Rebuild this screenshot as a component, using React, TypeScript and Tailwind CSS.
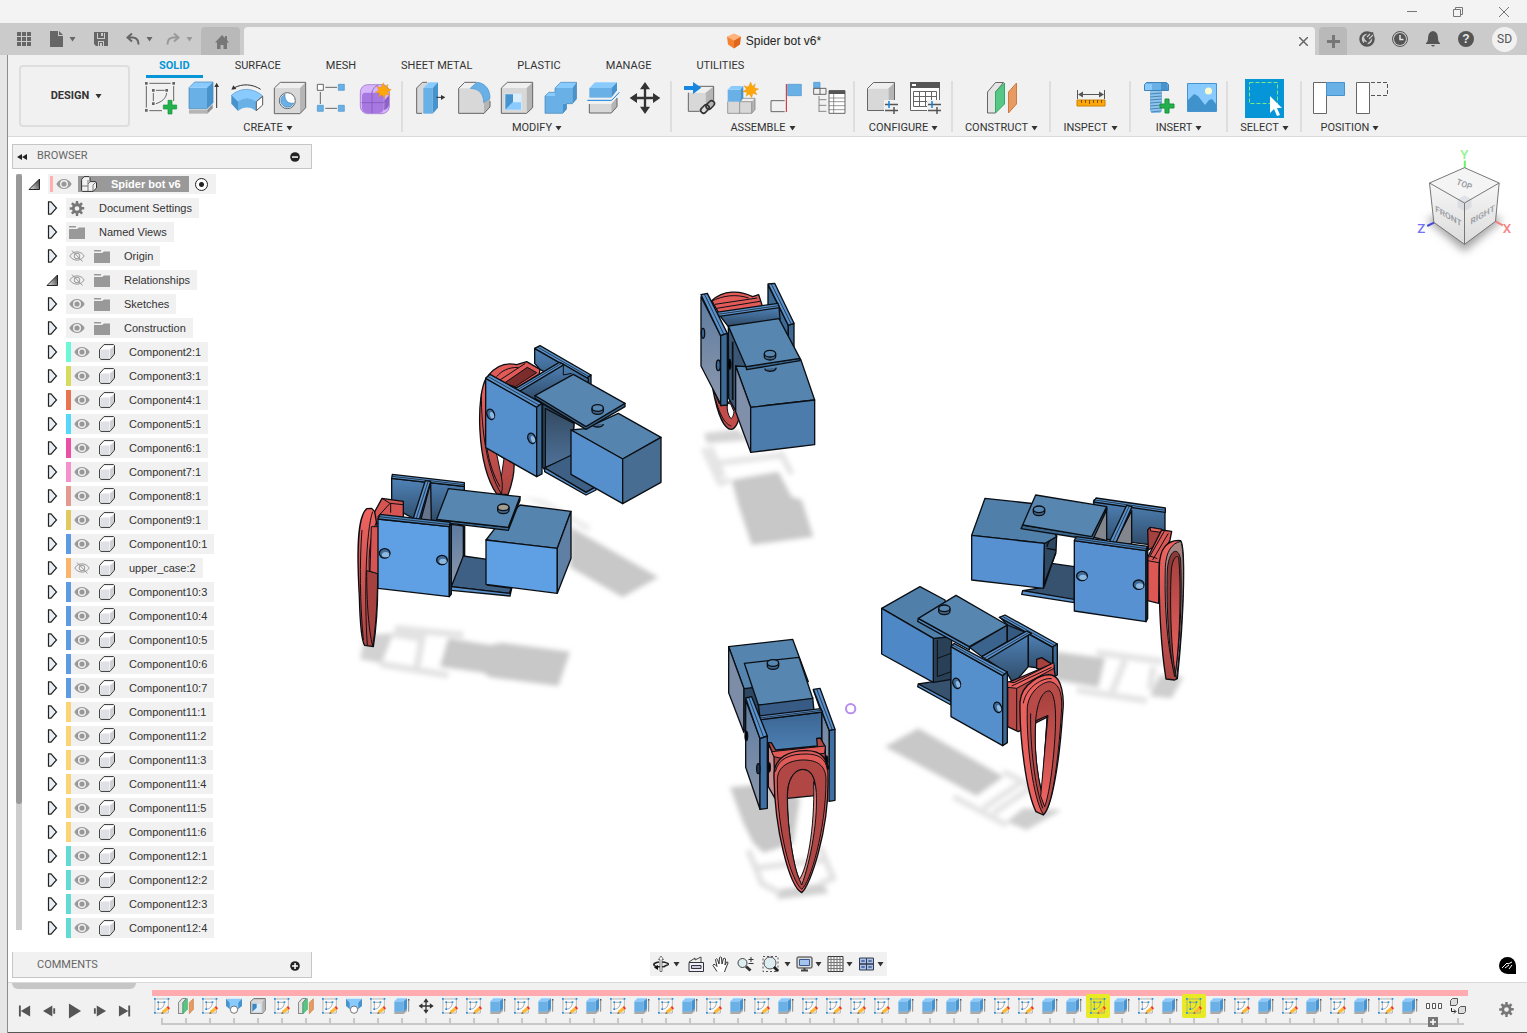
import React from 'react';

type IconProps = { children: React.ReactNode; box: string; className?: string };

const Icon = ({ children, box, className = 'h-9 w-9' }: IconProps) => (
  <svg viewBox={box} className={`${className} shrink-0`} fill="none" aria-hidden="true">
    {children}
  </svg>
);

const Caret = ({ className = 'fill-[#333]' }: { className?: string }) => (
  <svg viewBox="0 0 7 5" className={`h-[5px] w-[7px] shrink-0 ${className}`} aria-hidden="true">
    <path d="M.5 0h6L3.500 4.500z" />
  </svg>
);

const Star = ({ x, y }: { x: number; y: number }) => (
  <path
    transform={`translate(${x} ${y})`}
    d="M0-24 5-11 14-19 11-7 24-3 13 3 19 14 7 10 3 23-4 12-14 19-11 7-24 5-13-2-20-13-7-9z"
    fill="#ffa60a"
    stroke="#d98a00"
    strokeWidth="1"
  />
);

/* ---------- Ribbon icons ---------- */

const createIcons = [
  {
    name: 'Create Sketch',
    icon: (
      <Icon box="429 240 108 108">
        <path d="M448 250h64M439 258v65M521 258v45M448 332h38" stroke="#666" strokeWidth="3" />
        <path d="M435 246h8v8h-8zM517 246h8v8h-8zM435 327h8v8h-8zM456 267h8v8h-8zM496 267h8v8h-8zM456 307h8v8h-8z" fill="#666" />
        <path d="M468 271h26M460 279v24M500 279c-2 16-14 26-32 32" stroke="#666" strokeWidth="3" />
        <path d="M504 301h12v14h14v12h-14v15h-12v-15h-14v-12h14z" fill="#22b14c" stroke="#16913a" strokeWidth="2" />
      </Icon>
    ),
  },
  {
    name: 'Extrude',
    icon: (
      <Icon box="558 240 108 108">
        <path d="M567 329h55v12h-55z" fill="#b5b5b5" />
        <path d="M622 329l16-16v12l-16 16z" fill="#8f8f8f" />
        <path d="M567 263h54v63h-54z" fill="#69b0e6" />
        <path d="M567 263l17-17h55l-18 17z" fill="#8acbff" />
        <path d="M621 263l18-17v62l-18 18z" fill="#4693cd" />
        <path d="M567 326v-63l17-17h55v62l-18 18z" stroke="#3f83b8" strokeWidth="2" />
        <path d="M650 324v-66" stroke="#333" strokeWidth="3" />
        <path d="M650 248l7 13h-14z" fill="#333" />
      </Icon>
    ),
  },
  {
    name: 'Revolve',
    icon: (
      <Icon box="687 240 108 108">
        <path d="M694 286c28-24 64-24 94 2l-20 18c-18-12-36-12-54 0z" fill="#8acbff" stroke="#4693cd" strokeWidth="2" />
        <path d="M694 286l20 20v27l-20-22z" fill="#4693cd" />
        <path d="M714 306c18-12 36-12 54 0v27c-18-14-36-14-54 0z" fill="#69b0e6" />
        <path d="M769 305l19-16v26l-19 17z" fill="#fff" stroke="#555" strokeWidth="3" />
        <path d="M782 268c-24-16-56-18-80-4" stroke="#333" strokeWidth="3" />
        <path d="M694 269l6-13 9 11z" fill="#333" />
      </Icon>
    ),
  },
  {
    name: 'Hole',
    icon: (
      <Icon box="816 240 108 108">
        <path d="M823 264h77v77h-77z" fill="#d8d8d8" />
        <path d="M823 264l18-17h76l-17 17z" fill="#efefef" />
        <path d="M900 264l17-17v76l-17 18z" fill="#b5b5b5" />
        <path d="M823 341v-77l18-17h76v76l-17 18z" stroke="#666" strokeWidth="3" />
        <circle cx="862" cy="302" r="24" fill="#fff" stroke="#666" strokeWidth="3" />
        <path d="M855 283a20 20 0 1 0 26 26c-16 4-28-8-26-26z" fill="#69b0e6" stroke="#3f83b8" strokeWidth="2" />
      </Icon>
    ),
  },
  {
    name: 'Rectangular Pattern',
    icon: (
      <Icon box="945 240 108 108">
        <path d="M976 262h35M961 276v36M976 325h35" stroke="#666" strokeWidth="3" />
        <path d="M952 253h18v18h-18z" fill="#fff" stroke="#666" strokeWidth="3" />
        <path d="M1015 253h18v18h-18zM1015 316h18v18h-18zM952 316h18v18h-18z" fill="#69b0e6" stroke="#4693cd" strokeWidth="2" />
      </Icon>
    ),
  },
  {
    name: 'Create Form',
    icon: (
      <Icon box="1074 240 108 108">
        <rect x="1081" y="254" width="87" height="87" rx="22" fill="#d6b5fb" stroke="#8f5fc4" strokeWidth="2" />
        <path d="M1095 278h46q9 0 9 9v40q0 12-14 12h-32q-18 0-18-16v-34q0-11 9-11z" fill="#a678e0" />
        <path d="M1154 300l13-14v26q0 12-14 18z" fill="#8f62c9" />
        <path d="M1084 308h66q12-6 17-14M1116 274v66M1116 276c4-12 10-18 18-20M1152 276v54" stroke="#7d51b5" strokeWidth="2" />
        <Star x={1150} y={272} />
      </Icon>
    ),
  },
];

const modifyIcons = [
  {
    name: 'Press Pull',
    icon: (
      <Icon box="32 90 108 108">
        <path d="M46 114l17-17h20v93H46z" fill="#d8d8d8" />
        <path d="M62 190H46v-76l17-17h14" stroke="#666" strokeWidth="3" />
        <path d="M66 114h28v77H66z" fill="#69b0e6" />
        <path d="M66 114l17-17h27l-16 17z" fill="#8acbff" />
        <path d="M94 114l16-17v76l-16 18z" fill="#4693cd" />
        <path d="M105 142h16" stroke="#333" strokeWidth="3" />
        <path d="M119 135l13 7-13 8z" fill="#333" />
      </Icon>
    ),
  },
  {
    name: 'Fillet',
    icon: (
      <Icon box="161 90 108 108">
        <path d="M172 191v-76l18-18h30v20c20 4 30 22 32 44v30z" fill="#d8d8d8" />
        <path d="M172 115l18-18h34l-17 18z" fill="#efefef" />
        <path d="M248 158l18-14v26l-18 20z" fill="#b5b5b5" />
        <path d="M225 97H190l-18 18v75h76l18-19v-18" stroke="#666" strokeWidth="3" />
        <path d="M207 115l20-18c26 2 40 24 39 48l-19 13c0-24-12-42-40-43z" fill="#69b0e6" stroke="#4693cd" strokeWidth="2" />
      </Icon>
    ),
  },
  {
    name: 'Shell',
    icon: (
      <Icon box="291 90 108 108">
        <path d="M301 114h76v76h-76z" fill="#d8d8d8" />
        <path d="M301 114l18-17h76l-18 17z" fill="#efefef" />
        <path d="M377 114l18-17v76l-18 17z" fill="#b5b5b5" />
        <path d="M301 190v-76l18-17h76v76l-18 17z" stroke="#666" strokeWidth="3" />
        <path d="M311 131h51v49h-51z" fill="#d9edfb" />
        <path d="M313 133h23v24l-23 22z" fill="#4693cd" />
        <path d="M336 157h24v22h-47z" fill="#8acbff" />
      </Icon>
    ),
  },
  {
    name: 'Combine',
    icon: (
      <Icon box="418 90 108 108">
        <path d="M430 138h30v-24h52v47h-28v29h-54z" fill="#69b0e6" />
        <path d="M460 114l17-17h48l-13 17zM430 138l12-11h18v11z" fill="#8acbff" />
        <path d="M512 114l13-17v49l-13 15zM484 161h11v16l-11 13z" fill="#4693cd" />
        <path d="M430 190v-52l12-11h18v-13l17-17h48v49l-13 15h-18v16l-11 13z" stroke="#3f83b8" strokeWidth="2" />
      </Icon>
    ),
  },
  {
    name: 'Split Body',
    icon: (
      <Icon box="548 90 108 108">
        <path d="M564 162h66v27h-66z" fill="#d8d8d8" />
        <path d="M630 162l17-20v28l-17 19z" fill="#b5b5b5" />
        <path d="M564 162v27h66l17-19v-26" stroke="#666" strokeWidth="3" />
        <path d="M564 114h66v29h-66z" fill="#69b0e6" />
        <path d="M564 114l17-17h66l-17 17z" fill="#8acbff" />
        <path d="M630 114l17-17v24l-17 22z" fill="#4693cd" />
        <path d="M558 151h73l23-24" stroke="#f1f1f1" strokeWidth="9" />
        <path d="M558 151h73l23-24" stroke="#0f82e0" strokeWidth="3" />
      </Icon>
    ),
  },
  {
    name: 'Move/Copy',
    icon: (
      <Icon box="681 90 108 108">
        <path d="M735 110v68M704 144h62" stroke="#333" strokeWidth="7" />
        <path d="M735 96l15 22h-30zM735 192l15-22h-30zM689 144l22-15v30zM781 144l-22-15v30z" fill="#333" />
      </Icon>
    ),
  },
];

const assembleIcons = [
  {
    name: 'Insert Component',
    icon: (
      <Icon box="840 90 108 108">
        <path d="M862 128h52v56h-52z" fill="#d8d8d8" />
        <path d="M862 128l22-19h54l-24 19z" fill="#efefef" />
        <path d="M914 128l24-19v54l-24 20z" fill="#b5b5b5" />
        <path d="M896 184h-34v-56M884 109h54v44" stroke="#666" strokeWidth="3" />
        <path d="M849 108h27V96l25 17-25 19v-12h-27z" fill="#1686e0" />
        <rect x="898" y="168" width="28" height="17" rx="8" transform="rotate(-45 912 177)" stroke="#333" strokeWidth="5" />
        <rect x="914" y="156" width="28" height="17" rx="8" transform="rotate(-45 928 165)" stroke="#333" strokeWidth="5" />
      </Icon>
    ),
  },
  {
    name: 'New Component',
    icon: (
      <Icon box="968 90 108 108">
        <path d="M979 148h72v42h-72z" fill="#d8d8d8" />
        <path d="M1015 155l9-10h37l-10 10z" fill="#efefef" />
        <path d="M1051 155l10-10v34l-10 11z" fill="#b5b5b5" />
        <path d="M979 155v35h72l10-11v-34h-37l-9 10v35M1015 155h36v35" stroke="#777" strokeWidth="2" />
        <path d="M979 119h38v36h-38z" fill="#69b0e6" />
        <path d="M979 119l11-11h36l-9 11z" fill="#8acbff" />
        <path d="M1017 119l9-11v36l-9 11z" fill="#4693cd" />
        <Star x={1048} y={120} />
      </Icon>
    ),
  },
  {
    name: 'Joint',
    icon: (
      <Icon box="1096 90 108 108">
        <path d="M1149 152h-41v33h41" stroke="#666" strokeWidth="3" />
        <path d="M1158 103h41v34h-41z" fill="#69b0e6" stroke="#4693cd" strokeWidth="2" />
        <path d="M1154 102v84" stroke="#d01f1f" strokeWidth="3" />
      </Icon>
    ),
  },
  {
    name: 'Bill of Materials',
    icon: (
      <Icon box="1226 90 108 108">
        <path d="M1237 97h19v18h-19z" fill="#69b0e6" stroke="#4693cd" strokeWidth="2" />
        <path d="M1237 115h37v18h-37zM1256 115v18" stroke="#666" strokeWidth="3" />
        <path d="M1253 138v48M1253 149h22M1253 166h22M1253 184h22" stroke="#888" strokeWidth="3" />
        <path d="M1283 122h48v68h-48z" fill="#fff" stroke="#666" strokeWidth="3" />
        <path d="M1283 121h48v11h-48z" fill="#555" />
        <path d="M1283 144h48M1283 155h48M1283 167h48M1283 179h48M1297 132v58" stroke="#666" strokeWidth="2" />
      </Icon>
    ),
  },
];

const Sliders = ({ x, y }: { x: number; y: number }) => (
  <g transform={`translate(${x} ${y})`} strokeWidth="1">
    <path d="M-1-1h14v13H-1z" fill="#f1f1f1" />
    <path d="M0 3.500h13M0 9.500h13" stroke="#555" strokeWidth="1.500" />
    <path d="M4 0v7" stroke="#0f82e0" strokeWidth="1.500" />
    <path d="M9 6v7" stroke="#555" strokeWidth="1.500" />
  </g>
);

const configureIcons = [
  {
    name: 'Configure Component',
    icon: (
      <Icon box="0 0 36 36">
        <path d="M3.500 8.500h21v22h-21z" fill="#d8d8d8" />
        <path d="M3.500 8.500l6-6h21l-6 6z" fill="#efefef" />
        <path d="M24.500 8.500l6-6v20l-6 6z" fill="#b5b5b5" />
        <path d="M20 30.500H3.500v-22l6-6h21V22" stroke="#666" />
        <Sliders x={21} y={21} />
      </Icon>
    ),
  },
  {
    name: 'Configuration Table',
    icon: (
      <Icon box="0 0 36 36">
        <path d="M3.500 3.500h29v27h-29z" fill="#fff" stroke="#666" />
        <path d="M3 2h30v6H3z" fill="#555" />
        <path d="M5 4h4v2H5z" fill="#fff" />
        <path d="M6.500 11.500h23v15h-23zM6.500 16.500h23M6.500 21.500h23M12.500 11.500v15M18.500 11.500v15M24.500 11.500v15" stroke="#666" />
        <Sliders x={21} y={21} />
      </Icon>
    ),
  },
];

const constructIcons = [
  {
    name: 'Offset Plane',
    icon: (
      <Icon box="0 0 36 36">
        <path d="M3.500 12l8-9.500h8l-8 9.500v21h-8z" fill="#e4e4e4" stroke="#666" />
        <path d="M11.500 12l9-9v21l-9 9z" fill="#57c785" stroke="#35a863" />
        <path d="M24.500 12l8-9v21l-8 9z" fill="#e89a63" stroke="#cc7a40" />
      </Icon>
    ),
  },
];

const inspectIcons = [
  {
    name: 'Measure',
    icon: (
      <Icon box="0 0 36 36">
        <path d="M4.500 10v9M31.500 10v9M6 14.500h24" stroke="#555" />
        <path d="M5 14.500l5-3v6zM31 14.500l-5-3v6z" fill="#555" />
        <path d="M4 20h28v6H4z" fill="#ffa60a" stroke="#c98200" />
        <path d="M8.500 20v3M12.500 20v3M16.500 20v4M20.500 20v3M24.500 20v3M28.500 20v3" stroke="#7d5200" />
      </Icon>
    ),
  },
];

const insertIcons = [
  {
    name: 'Insert Fastener',
    icon: (
      <Icon box="0 0 36 36">
        <path d="M4.500 4.500l2-2h20l2 2v6h-24z" fill="#69b0e6" stroke="#3f83b8" />
        <path d="M5 4h7v6H5z" fill="#8acbff" />
        <path d="M21 3h6l1 7h-7z" fill="#4693cd" />
        <path d="M10 11h12v20l-2 2h-8l-2-2z" fill="#8cc3ec" />
        <path d="M10 14l12-1M10 17l12-1M10 20l12-1M10 23l12-1M10 26l12-1M10 29l12-1M11 32l10-1" stroke="#4a86b5" />
        <path d="M25 19h4v5h5v4h-5v5h-4v-5h-5v-4h5z" fill="#22b14c" stroke="#16913a" />
      </Icon>
    ),
  },
  {
    name: 'Canvas',
    icon: (
      <Icon box="0 0 36 36">
        <path d="M4.500 3.500h29v28h-29z" fill="#8acbff" stroke="#4693cd" />
        <path d="M5 20l6-6 4 2 7 9 4-5 3-1 4 5v7H5z" fill="#3f92cc" />
        <circle cx="25.500" cy="11" r="3.500" fill="#fdfccf" />
      </Icon>
    ),
  },
];

const selectIcons = [
  {
    name: 'Select',
    icon: (
      <span className="flex h-[39px] w-[39px] shrink-0 items-center justify-center bg-[#0696d7]">
        <Icon box="0 0 36 36">
          <path d="M2.500 2.500h28v21h-28z" stroke="#7ee68a" strokeDasharray="4 2" />
          <path d="M23 16v17l4-4 3 7 3-1-3-7h5z" fill="#fff" />
        </Icon>
      </span>
    ),
  },
];

const positionIcons = [
  {
    name: 'Capture Position',
    icon: (
      <Icon box="0 0 36 36">
        <path d="M2.500 2.500h13v31h-13z" fill="#fff" stroke="#666" />
        <path d="M15.500 2.500h18v13h-18z" fill="#69b0e6" stroke="#4693cd" />
      </Icon>
    ),
  },
  {
    name: 'Revert Position',
    icon: (
      <Icon box="0 0 36 36">
        <path d="M2.500 2.500h13v31h-13z" fill="#fff" stroke="#666" />
        <path d="M17 2.500h16.500v13H17" stroke="#555" strokeDasharray="4 2" />
      </Icon>
    ),
  },
];

const ribbonGroups = [
  { label: 'CREATE', icons: createIcons, width: '' },
  { label: 'MODIFY', icons: modifyIcons, width: '' },
  { label: 'ASSEMBLE', icons: assembleIcons, width: '' },
  { label: 'CONFIGURE', icons: configureIcons, width: 'min-w-[98px]' },
  { label: 'CONSTRUCT', icons: constructIcons, width: 'min-w-[98px]' },
  { label: 'INSPECT', icons: inspectIcons, width: 'min-w-[80px]' },
  { label: 'INSERT', icons: insertIcons, width: '' },
  { label: 'SELECT', icons: selectIcons, width: 'min-w-[74px]' },
  { label: 'POSITION', icons: positionIcons, width: '' },
];

const workspaceTabs = ['SOLID', 'SURFACE', 'MESH', 'SHEET METAL', 'PLASTIC', 'MANAGE', 'UTILITIES'];

/* ---------- Browser tree ---------- */

interface TreeRow {
  name: string;
  kind: 'settings' | 'views' | 'folder' | 'component';
  hidden?: boolean;
  open?: boolean;
  color?: string;
}

const rows: TreeRow[] = [
  { name: 'Document Settings', kind: 'settings' },
  { name: 'Named Views', kind: 'views' },
  { name: 'Origin', kind: 'folder', hidden: true },
  { name: 'Relationships', kind: 'folder', hidden: true, open: true },
  { name: 'Sketches', kind: 'folder' },
  { name: 'Construction', kind: 'folder' },
  { name: 'Component2:1', kind: 'component', color: 'bg-[#6cf9d8]' },
  { name: 'Component3:1', kind: 'component', color: 'bg-[#d7dc5c]' },
  { name: 'Component4:1', kind: 'component', color: 'bg-[#e97450]' },
  { name: 'Component5:1', kind: 'component', color: 'bg-[#55d9fb]' },
  { name: 'Component6:1', kind: 'component', color: 'bg-[#ec4fa6]' },
  { name: 'Component7:1', kind: 'component', color: 'bg-[#f692cb]' },
  { name: 'Component8:1', kind: 'component', color: 'bg-[#e59a90]' },
  { name: 'Component9:1', kind: 'component', color: 'bg-[#e0ca62]' },
  { name: 'Component10:1', kind: 'component', color: 'bg-[#5d9be2]' },
  { name: 'upper_case:2', kind: 'component', hidden: true, color: 'bg-[#fbb56a]' },
  { name: 'Component10:3', kind: 'component', color: 'bg-[#5d9be2]' },
  { name: 'Component10:4', kind: 'component', color: 'bg-[#5d9be2]' },
  { name: 'Component10:5', kind: 'component', color: 'bg-[#5d9be2]' },
  { name: 'Component10:6', kind: 'component', color: 'bg-[#5d9be2]' },
  { name: 'Component10:7', kind: 'component', color: 'bg-[#5d9be2]' },
  { name: 'Component11:1', kind: 'component', color: 'bg-[#fdd475]' },
  { name: 'Component11:2', kind: 'component', color: 'bg-[#fdd475]' },
  { name: 'Component11:3', kind: 'component', color: 'bg-[#fdd475]' },
  { name: 'Component11:4', kind: 'component', color: 'bg-[#fdd475]' },
  { name: 'Component11:5', kind: 'component', color: 'bg-[#fdd475]' },
  { name: 'Component11:6', kind: 'component', color: 'bg-[#fdd475]' },
  { name: 'Component12:1', kind: 'component', color: 'bg-[#61dbd6]' },
  { name: 'Component12:2', kind: 'component', color: 'bg-[#61dbd6]' },
  { name: 'Component12:3', kind: 'component', color: 'bg-[#61dbd6]' },
  { name: 'Component12:4', kind: 'component', color: 'bg-[#61dbd6]' },
];

const Expander = ({ open }: { open?: boolean }) => (
  <svg viewBox="0 0 12 14" className="h-[14px] w-3 shrink-0" aria-hidden="true">
    {open ? (
      <>
        <defs>
          <linearGradient id="openArrow" x1="0" y1="1" x2="1" y2="0.500">
            <stop offset="0" stopColor="#eee" />
            <stop offset="1" stopColor="#555" />
          </linearGradient>
        </defs>
        <path d="M1 12.500L11.500 2v10.500z" fill="url(#openArrow)" stroke="#222" />
      </>
    ) : (
      <path d="M2.500 .8h2.500l5.500 6.200-5.500 6.200H2.500z" fill="#e8ecf4" stroke="#222" strokeWidth="1.200" />
    )}
  </svg>
);

const Eye = ({ hidden }: { hidden?: boolean }) => (
  <svg viewBox="0 0 16 12" className="h-3 w-4 shrink-0" fill="none" aria-hidden="true">
    {hidden ? (
      <g stroke="#999">
        <path d="M.8 6C4 .5 12 .5 15.200 6 12 11.500 4 11.500.8 6zM3 .5L13.500 11.500" />
        <circle cx="8" cy="6" r="2.800" />
      </g>
    ) : (
      <>
        <path d="M.3 6C4-.6 12-.6 15.700 6 12 12.600 4 12.600.3 6z" fill="#999" />
        <circle cx="8" cy="6" r="3.300" stroke="#f1f1f1" strokeWidth="1.400" />
      </>
    )}
  </svg>
);

const Folder = () => (
  <svg viewBox="0 0 16 13" className="h-[13px] w-4 shrink-0" aria-hidden="true">
    <path d="M0 0h7v1.500H0zM0 3h8l2-1.500h6V13H0z" fill="#999" />
  </svg>
);

const Gear = ({ className }: { className: string }) => (
  <svg viewBox="0 0 16 16" className={`${className} shrink-0 fill-[#777]`} aria-hidden="true">
    <path
      fillRule="evenodd"
      d="M6.700 0h2.600v2.400l1.400.6 1.700-1.700 1.900 1.900L12.600 5l.6 1.400h2.500v2.700h-2.400l-.6 1.500 1.700 1.800-1.900 1.900-1.800-1.700-1.400.6V16H6.700v-2.600l-1.500-.6-1.800 1.700-1.800-1.900 1.700-1.900-.6-1.500H.2V6.600h2.500L3.300 5 1.600 3.300l1.900-1.900L5.300 3l1.400-.6zM8 5.500a2.500 2.500 0 1 0 0 5 2.500 2.500 0 0 0 0-5z"
    />
  </svg>
);

const CubeIcon = () => (
  <svg viewBox="0 0 16 16" className="h-4 w-4 shrink-0" aria-hidden="true">
    <path d="M1 5.500L5.500 1h10v9L11 15.500H2l-1-1z" fill="#fff" />
    <path d="M2 5.500h8.500v9H2z" fill="#dfe0e6" />
    <path d="M11 5.500L15 2v8l-4 4.500z" fill="#cfd0d6" />
    <path d="M.6 5.500L5 .6h9.500l1 1V10L11 15.400H2L.6 14z" fill="none" stroke="#333" />
  </svg>
);

function BrowserPanel() {
  return (
    <aside className="relative flex h-full w-[308px] flex-col">
      <header className="mt-[5px] ml-1 flex h-[25px] w-[300px] shrink-0 items-center border border-[#c6c6c6] bg-[#f1f1f1] px-1">
        <button aria-label="Collapse browser" className="w-5">
          <svg viewBox="0 0 10 6" className="h-[6px] w-[10px] fill-[#222]">
            <path d="M5 0v6L0 3zM10 0v6L5 3z" />
          </svg>
        </button>
        <span className="font-[Roboto,sans-serif] text-[11px] text-[#666]">BROWSER</span>
        <button aria-label="Minimize" className="mr-[7px] ml-auto">
          <svg viewBox="0 0 10 10" className="h-[10px] w-[10px]">
            <circle cx="5" cy="5" r="4.800" fill="#222" />
            <path d="M2 4.300h6v1.500H2z" fill="#fff" />
          </svg>
        </button>
      </header>

      <div className="mt-[5px] flex min-h-0 flex-1 pl-2">
        <div className="h-[756px] w-[6px] bg-[#cdcdcd]">
          <div className="h-5/6 w-full rounded-full bg-[#999]" />
        </div>
        <ul className="flex flex-col gap-1 pl-[6px] text-[11px] text-[#333]">
          <li className="flex h-5 items-center">
            <Expander open />
            <div className="ml-2 flex h-5 items-center bg-[#f1f1f1] pr-2 pl-[2px]">
              <span className="h-4 w-[3px] bg-[#ffaeb2]" />
              <span className="ml-[3px] flex"><Eye /></span>
              <span className="ml-[6px] flex h-4 items-center bg-[#999] px-2 pl-[3px] font-bold text-white">
                <svg viewBox="0 0 16 16" className="mr-[14px] h-4 w-4" aria-hidden="true">
                  <path d="M.6 3.500L3 .6h5l1 1v4h5.500l1 1V12L12 15.400H1.500l-.9-1z" fill="#f2f2f2" stroke="#333" />
                  <path d="M1 10h6v5M7 10V4M7 8l2-2M12 9v6M12 9l3-3" fill="none" stroke="#777" />
                </svg>
                Spider bot v6
              </span>
              <input type="radio" defaultChecked aria-label="Activate component" className="ml-[6px] h-[13px] w-[13px] appearance-none rounded-full border border-[#222] bg-[radial-gradient(circle,#222_0_2px,#fff_3px)]" />
            </div>
          </li>
          {rows.map((row) => (
            <li key={row.name} className="flex h-5 items-center pl-[18px]">
              <Expander open={row.open} />
              <div className="ml-2 flex h-5 items-center bg-[#f1f1f1] pr-[7px] whitespace-nowrap">
                {row.color && <span className={`h-5 w-[5px] ${row.color}`} />}
                <span className="flex items-center gap-[9px] pl-[3px]">
                  {row.kind === 'settings' && <Gear className="h-[15px] w-4" />}
                  {row.kind === 'views' && <Folder />}
                  {(row.kind === 'folder' || row.kind === 'component') && <Eye hidden={row.hidden} />}
                  {row.kind === 'folder' && <Folder />}
                  {row.kind === 'component' && <CubeIcon />}
                </span>
                <span className="ml-[14px]">{row.name}</span>
              </div>
            </li>
          ))}
        </ul>
      </div>

      <footer className="mb-1 ml-1 flex h-[26px] w-[300px] shrink-0 items-center border border-t-0 border-[#c6c6c6] bg-[#f1f1f1] pt-[2px] pr-1 pl-6">
        <span className="font-[Roboto,sans-serif] text-[11px] text-[#666]">COMMENTS</span>
        <button aria-label="Expand comments" className="mr-[7px] ml-auto">
          <svg viewBox="0 0 10 10" className="h-[10px] w-[10px]">
            <circle cx="5" cy="5" r="4.800" fill="#222" />
            <path d="M2 4.300h6v1.500H2zM4.300 2h1.500v6H4.300z" fill="#fff" />
          </svg>
        </button>
      </footer>
    </aside>
  );
}

/* ---------- Model ---------- */

const Hole = ({ x, y, r = -20, rx = 11, ry = 16 }: { x: number; y: number; r?: number; rx?: number; ry?: number }) => (
  <g transform={`rotate(${r} ${x} ${y})`}>
    <ellipse cx={x} cy={y} rx={rx} ry={ry} fill="#3f6c9b" />
    <ellipse cx={x + 3} cy={y + 4} rx={rx - 5} ry={ry - 6} fill="#8db8e0" stroke="none" />
  </g>
);

const Pin = ({ x, y, fill = '#5787b0' }: { x: number; y: number; fill?: string }) => (
  <g>
    <path d={`M${x - 17} ${y - 5}v9a17 10 0 0 0 34 0v-9`} fill="#41668b" />
    <ellipse cx={x} cy={y - 5} rx="17" ry="10" fill={fill} />
  </g>
);

function RobotModel() {
  return (
    <svg viewBox="340 270 860 640" className="absolute top-[131px] left-[332px] h-[640px] w-[860px]" role="img" aria-label="Spider bot model">
      <defs>
        <filter id="soft" x="-20%" y="-20%" width="140%" height="140%">
          <feGaussianBlur stdDeviation="8" />
        </filter>
        <linearGradient id="inner" x1="0" y1="0" x2="0" y2="1">
          <stop offset="0" stopColor="#4f83b8" />
          <stop offset="1" stopColor="#2f4a66" />
        </linearGradient>
        <linearGradient id="innerUp" x1="0" y1="1" x2="0" y2="0">
          <stop offset="0" stopColor="#4f7299" />
          <stop offset="1" stopColor="#334a61" />
        </linearGradient>
        <linearGradient id="slate" x1="0" y1="0" x2="0" y2="1">
          <stop offset="0" stopColor="#5c7ba0" />
          <stop offset="1" stopColor="#8d98ac" />
        </linearGradient>
        <linearGradient id="steel" x1="0" y1="0" x2="0" y2="1">
          <stop offset="0" stopColor="#3a6592" />
          <stop offset="1" stopColor="#4e80b3" />
        </linearGradient>
        <linearGradient id="red" x1="0" y1="0" x2="0" y2="1">
          <stop offset="0" stopColor="#f06461" />
          <stop offset="1" stopColor="#ab4441" />
        </linearGradient>
        <linearGradient id="redUp" x1="0" y1="1" x2="0" y2="0">
          <stop offset="0" stopColor="#f06461" />
          <stop offset="1" stopColor="#a5413e" />
        </linearGradient>
      </defs>

      {/* Left pair */}
      <g transform="translate(340 330) scale(.33333)" stroke="#0b0f14" strokeWidth="4" strokeLinejoin="round">
        <g filter="url(#soft)" stroke="none" fill="#c8c8c8">
          <path d="M690 590L955 742 848 802 690 712z" />
          <path d="M540 500L610 508 755 590 740 605 650 545z" fill="#ececec" />
          <path d="M325 925L450 945 485 938 690 965 655 1068 450 1042 430 1028 300 1010z" />
          <path d="M60 988L75 915 160 910 125 1000z" fill="#d2d2d2" />
          <path d="M165 895L370 915M120 1002L325 1036M250 905L230 1015M160 912l90 14" stroke="#e2e2e2" strokeWidth="20" />
        </g>

        {/* back leg */}
        <path d="M440 142C408 190 408 400 470 492L504 494C516 462 524 425 522 395L470 372C452 330 436 240 444 150z" fill="url(#red)" />
        <path d="M470 372L484 440 492 386z" fill="#fff" strokeWidth="3" />
        <path d="M424 190C424 300 440 420 484 492M440 350C448 400 462 440 480 470M484 440C488 460 488 475 484 492" fill="none" strokeWidth="3" />
        <path d="M445 136C470 105 500 97 530 104L560 95 600 118 598 132 530 174z" fill="#e05a57" />
        <path d="M470 140C485 122 505 112 535 112M480 150L556 100" fill="none" strokeWidth="3" />
        <path d="M492 160L562 112 590 128 526 170z" fill="#7d2c2c" strokeWidth="3" />
        <path d="M584 55L740 143V200L600 118 584 100z" fill="url(#inner)" />
        <path d="M584 55L600 47 753 135 740 145z" fill="#5b92cc" />
        <path d="M592 51L747 140" strokeWidth="2" />
        <path d="M740 145L753 135V180L740 172z" fill="#37628f" />
        <path d="M526 180L660 98 672 104 745 146 745 165 700 150 585 215z" fill="url(#inner)" />
        <path d="M670 104V135L695 130" fill="none" strokeWidth="3" />
        <path d="M522 178L658 97 672 104 538 184z" fill="#5b92cc" />
        <path d="M530 181L665 100" strokeWidth="2" />
        <path d="M608 222L702 276 695 385 615 420 608 412z" fill="#31506f" />
        <path d="M616 235L702 280 695 380 616 412z" fill="url(#innerUp)" />
        <path d="M614 414L695 375 700 435 768 470 738 487z" fill="#3e6084" />
        <path d="M614 414L738 487 768 470V480L738 495 614 425z" fill="#5b92cc" />
        <path d="M437 145L590 230V440L437 353z" fill="#5690cc" />
        <path d="M437 145L450 133 606 220 590 232z" fill="#5b92cc" />
        <path d="M443 139L598 226" strokeWidth="2" />
        <path d="M590 232L606 220V432L590 440z" fill="#3d6995" />
        <Hole x={452} y={253} />
        <Hole x={575} y={325} />
        <path d="M693 300L735 296 835 250 963 322 848 387z" fill="#5585ae" />
        <path d="M756 282a17 9 0 0 0 34 0" fill="#41668b" />
        <path d="M693 300L848 387V521L693 433z" fill="#5690cc" />
        <path d="M848 387L963 322V457L848 521z" fill="#476d93" />
        <path d="M585 197V205L738 298 855 230V220z" fill="#3b678f" />
        <path d="M585 197L700 133 855 220 738 290z" fill="#5787b0" />
        <Pin x={773} y={239} />

        {/* front leg */}
        <path d="M155 445L373 470V580L220 565 155 530z" fill="url(#inner)" />
        <path d="M157 433L373 458V469L155 445z" fill="#5b92cc" />
        <path d="M156 439L373 464" strokeWidth="2" />
        <path d="M96 560L126 505 190 514V560L120 590z" fill="#d65451" />
        <path d="M126 505L150 520 112 562M150 520L190 524M152 522V548" fill="none" strokeWidth="3" />
        <path d="M242 572L272 458 274 572z" fill="#64748c" />
        <path d="M220 564L256 452 272 454 236 574z" fill="#5b92cc" />
        <path d="M264 455L228 568" strokeWidth="2" />
        <path d="M80 536C52 560 50 660 58 800 60 880 66 935 74 946L100 950C108 900 114 820 113 740V600L104 545 95 535z" fill="url(#red)" />
        <path d="M80 722L113 730C112 830 106 900 98 948 86 900 80 820 80 722z" fill="#a5413e" strokeWidth="3" />
        <path d="M98 545C78 600 72 800 82 946M110 575C88 620 86 680 88 725M66 600C58 700 60 820 70 930" fill="none" strokeWidth="3" />
        <path d="M94 590H116V732L90 724z" fill="#d65451" strokeWidth="3" />
        <path d="M334 583L372 588V680L334 772z" fill="url(#slate)" />
        <path d="M372 588V680" strokeWidth="8" />
        <path d="M370 678L442 688V765L515 775 508 790 334 770z" fill="#3e6084" />
        <path d="M334 770L508 790 515 775 510 798 334 781z" fill="#5b92cc" />
        <path d="M114 567L328 590V800L114 775z" fill="#5f9fe3" />
        <path d="M114 567L120 553 332 577 328 590z" fill="#4c84bd" />
        <path d="M117 560L330 584" strokeWidth="2" />
        <path d="M328 590L334 577V792L328 800z" fill="#203a55" />
        <Hole x={134} y={670} r={0} rx={16} ry={14} />
        <Hole x={306} y={690} r={0} rx={16} ry={14} />
        <path d="M465 595L540 525 693 544 652 655 438 630z" fill="#5585ae" />
        <path d="M438 630L652 655V790L438 763z" fill="#5f9fe3" />
        <path d="M652 655L693 544V685L652 790z" fill="#5f7fa5" />
        <path d="M330 580V573L505 592 540 500V511L505 601z" fill="#3b678f" />
        <path d="M325 476L540 500 505 592 290 568z" fill="#5787b0" />
        <Pin x={490} y={537} fill="#a19d93" />
      </g>

      {/* Top leg */}
      <g transform="translate(680 270) scale(.33333)" stroke="#0b0f14" strokeWidth="4" strokeLinejoin="round">
        <g filter="url(#soft)" stroke="none" fill="#c8c8c8">
          <path d="M155 630L295 605 335 680 365 690 400 800 215 825 175 705z" />
          <path d="M72 490L170 478 215 510 80 520z" fill="#d4d4d4" />
          <path d="M70 535L120 640 150 630M110 580L310 555M300 545L335 612M90 530l40 90" fill="none" stroke="#e4e4e4" strokeWidth="18" />
        </g>
        <path d="M95 92C130 60 180 60 218 80L236 74 247 108 118 132z" fill="#e25b58" />
        <path d="M92 95C130 75 170 72 206 84M105 103L232 84M110 115L240 94" fill="none" strokeWidth="3" />
        <path d="M98 355C112 430 132 478 154 478 170 476 176 450 182 425L150 390 142 405 118 400z" fill="#c24c49" />
        <path d="M142 400L152 402 162 425C160 440 156 446 152 445 144 435 140 420 142 400z" fill="#fff" strokeWidth="3" />
        <path d="M106 385C120 440 138 464 154 468" fill="none" strokeWidth="3" />
        <path d="M264 45L325 165V200L264 105z" fill="#3d6995" />
        <path d="M325 165L342 160V240L325 210z" fill="#3d6995" />
        <path d="M264 42L284 40 342 160 325 166z" fill="#5b92cc" />
        <path d="M274 42L334 163" strokeWidth="2" />
        <path d="M118 135L297 110 300 148 145 170z" fill="url(#inner)" />
        <path d="M108 127L294 100 298 113 118 139z" fill="#5b92cc" />
        <path d="M113 133L296 107" strokeWidth="2" />
        <path d="M145 170L205 298 168 290V425L146 385z" fill="#3a5775" />
        <path d="M158 215V390" strokeWidth="5" />
        <ellipse cx="148" cy="283" rx="5" ry="15" />
        <path d="M63 80L122 197V402L63 288z" fill="url(#slate)" />
        <path d="M63 74L82 70 142 190 122 197z" fill="#5b92cc" />
        <path d="M73 72L132 194" strokeWidth="2" />
        <path d="M122 197L142 190V405L122 407z" fill="#3d6995" />
        <ellipse cx="69" cy="190" rx="5" ry="15" fill="#3d6995" />
        <ellipse cx="115" cy="286" rx="6" ry="16" fill="#3d6995" />
        <path d="M167 288L200 290 362 268 404 390 212 412z" fill="#5585ae" />
        <path d="M167 288L212 412V547L167 425z" fill="#8190aa" />
        <path d="M212 412L404 390V524L212 547z" fill="#4c7cac" />
        <path d="M254 296a17 9 0 0 0 34-3" fill="#41668b" />
        <path d="M198 290L360 265V272L200 299z" fill="#3b678f" />
        <path d="M145 168L297 146 360 265 198 290z" fill="#5787b0" />
        <Pin x={270} y={256} />
      </g>

      {/* Bottom leg */}
      <g transform="translate(700 630) scale(.33333)" stroke="#0b0f14" strokeWidth="4" strokeLinejoin="round">
        <g filter="url(#soft)" stroke="none" fill="#c8c8c8">
          <path d="M90 472L200 462 300 505 280 640 190 668 160 640 130 580z" />
          <path d="M225 780L370 760 385 790 235 808z" fill="#d0d0d0" />
          <path d="M145 660L185 760 240 790M160 715L370 690M360 650L400 745 360 760" fill="none" stroke="#e2e2e2" strokeWidth="18" />
        </g>
        <path d="M86 50L278 28 325 155 150 175 132 176z" fill="#5585ae" />
        <path d="M86 50L132 176V308L86 188z" fill="#7d8da8" />
        <path d="M132 176L165 172 180 250 140 308 132 300z" fill="#2d4762" />
        <path d="M175 222L338 203 342 242 180 262z" fill="#375b84" />
        <path d="M133 100L297 82 338 205 175 225z" fill="#5787b0" />
        <Pin x={219} y={104} />
        <path d="M340 180L388 302V420L365 360V250z" fill="url(#slate)" />
        <path d="M340 178L360 175 405 298 388 302z" fill="#5b92cc" />
        <path d="M350 177L397 300" strokeWidth="2" />
        <path d="M388 302L405 298V511L387 514z" fill="#3f6fa3" />
        <path d="M182 268L365 246V360L215 362 200 330z" fill="url(#steel)" />
        <path d="M175 258L362 236 368 246 182 269z" fill="#5b92cc" />
        <path d="M178 264L365 241" strokeWidth="2" />
        <path d="M205 345L226 378 225 505 205 470z" fill="#c98f92" />
        <path d="M205 338L214 338 227 360 352 348 350 325 361 324 376 350V480L345 497 262 505 225 500 222 380z" fill="#b04744" />
        <path d="M215 365L376 348 374 370 240 384 222 380z" fill="#e05a57" strokeWidth="3" />
        <path d="M137 210L180 325V538L137 412z" fill="url(#slate)" />
        <path d="M137 204L155 200 202 318 180 326z" fill="#5b92cc" />
        <path d="M146 202L191 322" strokeWidth="2" />
        <path d="M180 326L202 318V535L180 538z" fill="#3f6fa3" />
        <ellipse cx="139" cy="318" rx="4" ry="14" />
        <ellipse cx="175" cy="416" rx="5" ry="15" fill="#223a55" />
        <ellipse cx="207" cy="412" rx="4" ry="14" />
        <ellipse cx="379" cy="392" rx="4" ry="14" />
        <path
          fillRule="evenodd"
          d="M222 440C220 380 270 362 318 362 365 362 386 385 384 440 388 600 330 770 305 788 268 768 224 600 222 440zM262 505C260 445 285 418 308 418 335 418 350 445 347 500 345 610 322 740 302 752 284 735 262 600 262 505z"
          fill="#e05a57"
        />
        <path
          fillRule="evenodd"
          d="M232 450C232 405 275 390 310 390 350 390 378 405 378 450 378 600 330 760 305 778 272 750 232 600 232 450zM262 505C260 445 285 418 308 418 335 418 350 445 347 500 345 610 322 740 302 752 284 735 262 600 262 505z"
          fill="#b04744"
          strokeWidth="3"
        />
        <path d="M226 425C235 385 270 372 318 372 355 372 378 385 382 420" fill="none" strokeWidth="3" />
        <path d="M341 455C345 600 320 720 298 748L305 765C330 700 358 560 347 470z" fill="#d88582" strokeWidth="3" />
        <circle cx="452" cy="236" r="14" fill="#fff" stroke="#b68cf2" strokeWidth="6" />
      </g>

      {/* Right pair */}
      <g transform="translate(870 480) scale(.33333)" stroke="#0b0f14" strokeWidth="4" strokeLinejoin="round">
        <g filter="url(#soft)" stroke="none" fill="#c8c8c8">
          <path d="M555 515L705 535 685 622 555 600z" />
          <path d="M870 585L940 590 905 655 840 648z" fill="#cecece" />
          <path d="M680 518L880 545M620 630L830 662M765 540L725 640M850 560l-10 70" fill="none" stroke="#e4e4e4" strokeWidth="20" />
          <path d="M45 800L145 745 400 890 320 948z" />
          <path d="M400 875L545 950M250 950L410 1035M450 910L340 985M480 925L370 1000" fill="none" stroke="#e4e4e4" strokeWidth="18" />
          <path d="M460 985L575 990 470 1050 410 1025z" fill="#cecece" />
        </g>

        {/* rear leg */}
        <path d="M545 250L613 260V362L458 332 520 322z" fill="#36526f" />
        <path d="M458 332L613 358V368L455 343z" fill="#5b92cc" />
        <path d="M522 190L545 160 560 165 558 215 522 322z" fill="#2f4963" />
        <path d="M530 205L558 210M522 312L558 218M545 165L530 200" strokeWidth="4" />
        <path d="M345 55L500 72 560 170 525 190 305 166z" fill="#5080aa" />
        <path d="M305 166L523 190 520 325 305 300z" fill="#5791d2" />
        <path d="M672 60L885 92V200L665 172z" fill="url(#inner)" />
        <path d="M670 66L678 54 886 84V97z" fill="#5b92cc" />
        <path d="M674 60L886 91" strokeWidth="2" />
        <path d="M665 170L710 82V182z" fill="#84868e" />
        <path d="M735 190L785 92V192z" fill="#84868e" />
        <path d="M718 186L770 76 786 80 736 192z" fill="#5b92cc" />
        <path d="M778 78L727 188" strokeWidth="2" />
        <path d="M458 135L665 168 710 82V90L668 180 453 146z" fill="#3b678f" />
        <path d="M497 45L710 80 665 170 458 135z" fill="#5787b0" />
        <Pin x={507} y={93} />
        <path d="M833 150L840 142 875 148 870 190 835 210z" fill="#a5413e" />
        <path d="M840 142L875 148 874 157 842 153z" fill="#e9605d" strokeWidth="3" />
        <path d="M833 232L875 150 905 154 900 180 868 245 866 370 833 362z" fill="#dd5855" />
        <path d="M838 232L885 150M848 240L895 160M833 242L866 248M840 228L862 236" fill="none" strokeWidth="3" />
        <path d="M868 262C868 205 892 178 932 182 946 200 944 390 922 596L914 600 888 597C872 500 866 360 868 262z" fill="url(#red)" />
        <path d="M886 262C888 215 905 190 932 184 946 210 942 400 920 596 896 540 882 400 886 262z" fill="#a88480" strokeWidth="3" />
        <path d="M892 270C896 210 925 195 932 240 938 380 926 520 914 590 898 520 888 390 892 270z" fill="#8b3a38" strokeWidth="3" />
        <path d="M904 270C908 232 920 225 926 232 934 320 930 480 916 580 905 520 898 380 904 270z" fill="url(#redUp)" strokeWidth="3" />
        <path d="M613 182L828 212V425L613 393z" fill="#5791d2" />
        <path d="M613 182L618 170 833 199 828 212z" fill="#4c84bd" />
        <path d="M616 176L831 206" strokeWidth="2" />
        <path d="M828 212L833 199V415L828 425z" fill="#203a55" />
        <Hole x={636} y={288} r={0} rx={16} ry={14} />
        <Hole x={806} y={314} r={0} rx={16} ry={14} />

        {/* front leg */}
        <path d="M190 605L243 590V668L145 612z" fill="#36526f" />
        <path d="M145 612L243 664V675L143 620z" fill="#5b92cc" />
        <path d="M190 475L245 468V598L190 607z" fill="#2a4057" />
        <path d="M202 480V590L243 575M202 535L243 520" fill="none" strokeWidth="3" />
        <path d="M35 385L150 320 225 360 245 470 190 475z" fill="#5080aa" />
        <path d="M35 385L190 475V607L35 522z" fill="#4f88c6" />
        <path d="M298 502L412 435V485L336 530z" fill="#3a638e" />
        <path d="M390 412L548 500V570L470 540 412 480V435z" fill="#3a638e" />
        <path d="M412 435L465 456 412 486z" fill="#36597f" />
        <path d="M388 412L405 405 562 492 548 501z" fill="#5b92cc" />
        <path d="M397 409L555 497" strokeWidth="2" />
        <path d="M548 501L562 492V585L550 592z" fill="#3d6995" />
        <path d="M345 535L475 462V560L430 612 412 580z" fill="url(#inner)" />
        <path d="M475 462L548 502V570L475 560z" fill="url(#inner)" />
        <path d="M335 530L470 453 484 460 350 540z" fill="#5b92cc" />
        <path d="M342 535L477 457" strokeWidth="2" />
        <path d="M145 415L298 500V510L143 424z" fill="#4c84bd" />
        <path d="M145 415L258 346 412 435 298 500z" fill="#5787b0" />
        <Pin x={223} y={390} />
        <path d="M500 538L515 533 552 556V580L500 565z" fill="#a5413e" />
        <path d="M413 608L550 550 556 590 530 712 445 755 413 740z" fill="#b84a47" />
        <path d="M413 605L432 608 552 548V565L440 625 413 622z" fill="#e9605d" strokeWidth="3" />
        <path d="M425 618L545 562M440 625V750" fill="none" strokeWidth="3" />
        <path
          fillRule="evenodd"
          d="M450 665C455 610 515 580 545 585 575 592 584 650 578 700 568 850 545 985 520 1005L498 995C470 940 448 780 450 665zM497 722L532 705 516 942C500 880 492 800 497 722z"
          fill="#e9605d"
        />
        <path
          fillRule="evenodd"
          d="M472 680C478 630 525 600 545 606 572 615 578 650 574 700 565 850 545 985 520 1003 490 960 468 790 472 680zM497 722L532 705 516 942C500 880 492 800 497 722z"
          fill="#b84a47"
          strokeWidth="3"
        />
        <path
          d="M497 722C502 660 520 630 540 633 562 650 558 740 552 810 545 890 535 950 524 980L512 948 534 706z"
          fill="url(#redUp)"
          strokeWidth="3"
        />
        <path d="M460 670C468 620 520 592 545 596M482 700C480 800 495 920 518 985" fill="none" strokeWidth="3" />
        <path d="M243 500L398 587V797L243 710z" fill="#5690cc" />
        <path d="M243 500L252 490 412 576 398 587z" fill="#5b92cc" />
        <path d="M247 495L405 582" strokeWidth="2" />
        <path d="M398 587L412 576V788L398 797z" fill="#3d6995" />
        <Hole x={260} y={610} />
        <Hole x={383} y={682} />
      </g>
    </svg>
  );
}

const ViewCube = () => (
  <svg viewBox="100 0 320 360" className="absolute top-[1px] right-[7px] h-[120px] w-[107px] font-[Roboto,sans-serif]" role="img" aria-label="View cube">
    <defs>
      <filter id="cubeShadow" x="-30%" y="-30%" width="160%" height="160%">
        <feGaussianBlur stdDeviation="12" />
      </filter>
      <linearGradient id="cubeSide" x1="0" y1="0" x2="0" y2="1">
        <stop offset="0" stopColor="#f6f6f6" />
        <stop offset="1" stopColor="#dcdcdc" />
      </linearGradient>
    </defs>
    <path d="M140 240L254 190 368 240 254 335z" fill="#a5a5a5" filter="url(#cubeShadow)" />
    <path d="M255 62v24" stroke="#66f766" strokeWidth="6" />
    <path d="M142 258l22-11" stroke="#4848d8" strokeWidth="6" />
    <path d="M345 243l24 13" stroke="#f08585" strokeWidth="6" />
    <path d="M149 129L254 189V313L162 247z" fill="url(#cubeSide)" />
    <path d="M358 129L254 189V313L347 244z" fill="url(#cubeSide)" />
    <path d="M254 83L358 129 254 189 149 129z" fill="#f4f4f4" />
    <path d="M233 178l21-12 21 12v24l-21 12-21-12z" fill="#b8bfca" opacity=".35" />
    <path d="M254 83L358 129 347 244 254 313 162 247 149 129zM149 129L254 189 358 129M254 189V313" fill="none" stroke="#777" strokeWidth="3" />
    <g fontWeight="600" fill="#9a9da3" fontSize="25">
      <text transform="translate(228 132) rotate(22)">TOP</text>
      <text transform="translate(166 214) skewY(30)">FRONT</text>
      <text transform="translate(272 254) skewY(-30)">RIGHT</text>
    </g>
    <g fontSize="40" fontWeight="500">
      <text x="241" y="56" fill="#8ff58f">Y</text>
      <text x="112" y="280" fill="#7474f0">Z</text>
      <text x="369" y="280" fill="#f58484">X</text>
    </g>
  </svg>
);

function NavBar() {
  return (
    <nav aria-label="View controls" className="absolute bottom-[6px] left-[642px] flex h-6 items-center gap-[5px] bg-[#f1f1f1] px-[3px]">
      <div className="flex items-center gap-2">
        <button aria-label="Orbit" className="flex items-center gap-1">
          <Icon box="0 0 16 18" className="h-[18px] w-4">
            <path d="M6 7C2 7.500.8 9 .8 9.500.8 11 4 12.500 12 11.500M9 7c5 .5 6.500 1.500 6.500 2.500L11 11.500" stroke="#222" strokeWidth="1.500" />
            <path d="M7 16.500v-12H5.500L8 1l2.500 3.500H9v12z" fill="#fff" stroke="#555" strokeWidth=".8" />
            <path d="M1 12.500l4-2.500v5z" fill="#111" />
          </Icon>
          <Caret />
        </button>
        <button aria-label="Look At">
          <Icon box="0 0 16 16" className="h-4 w-4">
            <path d="M1 6.500h14.500v9H1z" fill="#eef" stroke="#333" />
            <path d="M3.500 9.500H13v3H3.500z" fill="#ccd" stroke="#333" />
            <path d="M1 6l6-4v2l6-3v5" stroke="#444" />
          </Icon>
        </button>
        <button aria-label="Pan">
          <Icon box="0 0 17 17" className="h-[17px] w-[17px]">
            <path d="M5 15.500L1 9.500q0-1.500 2-1l2 2L3.500 3.500q1-1.500 2 0L7 8 7.500 1.500q1-1 2 0L10 8l1.500-5.500q1.500-1 2 .5L13 9l1.500-3q1.500-.5 1.500 1L13.500 13l-1 3" fill="#fff" stroke="#333" />
          </Icon>
        </button>
        <button aria-label="Zoom">
          <Icon box="0 0 17 16" className="h-4 w-[17px]">
            <circle cx="5.500" cy="7" r="4.500" fill="#dcecf0" stroke="#444" />
            <path d="M9 10.500l4.500 4" stroke="#333" strokeWidth="3" />
            <path d="M14 1v5M11.500 3.500h5M11.500 7.500h5" stroke="#333" />
          </Icon>
        </button>
        <button aria-label="Fit" className="flex items-center gap-[5px]">
          <Icon box="0 0 17 16" className="h-4 w-[17px]">
            <path d="M1 .5h15v15H1z" stroke="#555" strokeDasharray="2 2" />
            <circle cx="8" cy="7" r="6" fill="#dcecf0" stroke="#555" />
            <path d="M12 11l4 4" stroke="#222" strokeWidth="3" />
          </Icon>
          <Caret />
        </button>
      </div>
      <button aria-label="Display settings" className="flex items-center gap-[2px]">
        <Icon box="0 0 17 16" className="h-4 w-[17px]">
          <rect x="1" y="1" width="15" height="11" rx="1" fill="#ddd" stroke="#333" />
          <path d="M3.500 3.500h10v6h-10z" fill="#a6c3ee" stroke="#3a5a90" />
          <path d="M5 14.500h7M8.500 12v3" stroke="#444" strokeWidth="2" />
        </Icon>
        <Caret />
      </button>
      <button aria-label="Grid and snaps" className="flex items-center gap-[2px]">
        <Icon box="0 0 17 16" className="h-4 w-[17px]">
          <path d="M1 .5h15v15H1z" fill="#f4f4f4" stroke="#333" />
          <path d="M4 .5v15M7 .5v15M10 .5v15M13 .5v15M1 3.500h15M1 6.500h15M1 9.500h15M1 12.500h15" stroke="#777" />
        </Icon>
        <Caret />
      </button>
      <button aria-label="Viewports" className="flex items-center gap-[2px]">
        <Icon box="0 0 17 14" className="h-[14px] w-[17px]">
          <path d="M1.500 1h7v6h-7zM8.500 1h7v6h-7zM1.500 7h7v6h-7zM8.500 7h7v6h-7z" fill="#a9c0e8" stroke="#333b4d" />
          <path d="M3.500 3.500h3v1h-3zM10.500 3.500h3v1h-3zM3.500 9.500h3v1h-3zM10.500 9.500h3v1h-3z" fill="#dfe9fa" stroke="#5673a8" />
        </Icon>
        <Caret />
      </button>
    </nav>
  );
}

/* ---------- Timeline ---------- */

// S sketch, P plane, L loft, H shell, E extrude, M move, Y selected sketch, G group, C copy
const features = 'SPSLHSPSLSEMSSESESESESESESESSSSEEEESSEEYESEYESESESESEGC'.split('');

const featureNames: Record<string, string> = {
  S: 'Sketch', Y: 'Sketch', P: 'Plane', L: 'Loft', H: 'Shell', E: 'Extrude', M: 'Move', G: 'Group', C: 'Copy',
};

const FeatureIcon = ({ type }: { type: string }) => {
  const size = 'h-4 w-4';
  if (type === 'S' || type === 'Y') {
    return (
      <Icon box="462 173 48 48" className={size}>
        <path d="M465 176h40v42h-40z" fill={type === 'Y' ? 'none' : '#fafafa'} stroke="#999" strokeWidth="2" />
        <path d="M475 186h18M475 186v21M493 186q0 18-17 21" stroke="#888" strokeWidth="2" />
        <path d="M462 173h5v5h-5zM503 173h5v5h-5zM462 215h5v5h-5zM472 183h5v5h-5zM491 183h5v5h-5zM472 204h5v5h-5z" fill="#1e90ea" />
        <path d="M484 221l3-10 13-11 7 8-14 10z" fill="#fbb93c" />
        <path d="M484 221l2-7 5 5z" fill="#666" />
        <path d="M500 201l4-4 6 7-4 4z" fill="#f0382c" />
      </Icon>
    );
  }
  if (type === 'P') {
    return (
      <Icon box="534 173 48 48" className={size}>
        <path d="M535 187l12-13h12l-10 13v33h-14z" fill="#e4e4e4" stroke="#777" strokeWidth="3" />
        <path d="M549 187l13-12v32l-13 13z" fill="#57c785" stroke="#35a863" strokeWidth="2" />
        <path d="M568 187l12-12v32l-12 13z" fill="#e89a63" stroke="#cc7a40" strokeWidth="2" />
      </Icon>
    );
  }
  if (type === 'L') {
    return (
      <Icon box="678 173 48 48" className={size}>
        <path d="M678 175h48l-12 12h-24z" fill="#8acbff" />
        <path d="M678 175l12 12v20l-12-10zM726 175l-12 12v20l12-10z" fill="#4693cd" />
        <path d="M689 180h26v28h-26z" fill="#8acbff" />
        <circle cx="702" cy="208" r="11" fill="#fff" stroke="#777" strokeWidth="3" />
      </Icon>
    );
  }
  if (type === 'H') {
    return (
      <Icon box="750 173 48 48" className={size}>
        <path d="M752 184l9-9h35v34l-9 11h-35z" fill="#d8d8d8" stroke="#666" strokeWidth="3" />
        <path d="M787 184l9-9v34l-9 11z" fill="#b5b5b5" />
        <path d="M757 190h25v24h-25z" fill="#d9edfb" />
        <path d="M757 190h13v12l-13 12z" fill="#3d86c0" />
      </Icon>
    );
  }
  if (type === 'M') {
    return (
      <Icon box="681 90 108 108" className={size}>
        <path d="M735 110v68M704 144h62" stroke="#333" strokeWidth="9" />
        <path d="M735 92l18 26h-36zM735 196l18-26h-36zM685 144l26-18v36zM787 144l-26-18v36z" fill="#333" />
      </Icon>
    );
  }
  if (type === 'G') {
    return (
      <Icon box="0 0 16 16" className={size}>
        <path d="M.5 5.500h3v5h-3zM6.500 5.500h3v5h-3zM12.500 5.500h3v5h-3z" fill="#fff" stroke="#555" />
      </Icon>
    );
  }
  if (type === 'C') {
    return (
      <Icon box="0 0 16 16" className={size}>
        <path d="M.5 2.500l2-2h5v5l-1.500 2H.5zM8.500 10.500l2-2h5v5l-1.500 2H8.500z" fill="#ddd" stroke="#555" />
        <path d="M1.500 10v3.500h4M4 11.500l2 2-2 2" stroke="#222" />
      </Icon>
    );
  }
  return (
    <Icon box="54 173 48 48" className={size}>
      <path d="M55 213h28l10-8v7l-10 9H55z" fill="#aaa" />
      <path d="M55 183h28v31H55z" fill="#69b0e6" />
      <path d="M55 183l9-9h29l-10 9z" fill="#8acbff" />
      <path d="M83 183l10-9v31l-10 9z" fill="#4693cd" />
      <path d="M98 214v-36" stroke="#555" strokeWidth="2" />
      <path d="M95 180l3-5 4 5z" fill="#333" />
    </Icon>
  );
};

const playback = [
  { name: 'Go to start', d: 'M0 0h2v12H0zM12 0v12L2 6z' },
  { name: 'Step back', d: 'M9 0v12L-1 6zM10 3h2v6h-2z' },
  { name: 'Play', d: 'M0-2l13 8-13 8z' },
  { name: 'Step forward', d: 'M3 0v12L13 6zM0 3h2v6H0z' },
  { name: 'Go to end', d: 'M10 0h2v12h-2zM0 0v12L10 6z' },
];

function Timeline() {
  return (
    <footer className="flex h-[51px] shrink-0 border-t border-b border-t-[#d9d9d9] border-b-[#555] bg-[#f1f1f1]">
      <div className="flex w-[142px] shrink-0 flex-col px-1">
        <div className="h-[6px] w-[124px] rounded-b-md bg-[#c6c6c6]" />
        <div className="flex flex-1 items-center gap-[11px] pl-[6px]">
          {playback.map((p) => (
            <button key={p.name} aria-label={p.name}>
              <svg viewBox="-1 -2 15 16" className="h-4 w-[14px] fill-[#555]">
                <path d={p.d} />
              </svg>
            </button>
          ))}
        </div>
      </div>
      <div className="relative flex min-w-0 flex-col pt-[7px]">
        <div className="mr-[2px] ml-[2px] h-[6px] bg-[#ffabb0]" />
        <div className="flex">
          {features.map((type, i) => (
            <div key={i} className="flex w-6 flex-col items-center">
              <button
                aria-label={featureNames[type]}
                className={`-mt-[2px] flex h-6 w-6 items-center justify-center ${type === 'Y' ? 'rounded-[2px] bg-[#e8ea25]' : ''}`}
              >
                <FeatureIcon type={type} />
              </button>
              <span className="h-[5px] w-[2px] bg-[#c8c8c8]" />
            </div>
          ))}
        </div>
        <div className="mr-[6px] ml-[11px] h-[2px] bg-[#c8c8c8]" />
        <svg viewBox="0 0 10 10" className="absolute right-[32px] bottom-[5px] h-[10px] w-[10px]" aria-hidden="true">
          <path d="M0 0h10v10H0z" fill="#777" />
          <path d="M2 4.300h6v1.500H2zM4.300 2h1.500v6H4.300z" fill="#fff" />
        </svg>
      </div>
      <button aria-label="Timeline settings" className="mr-[13px] ml-auto pt-1">
        <Gear className="h-[15px] w-[15px]" />
      </button>
    </footer>
  );
}

/* ---------- Window chrome ---------- */

function TitleBar() {
  return (
    <div className="flex h-[23px] shrink-0 items-center justify-end bg-[#f3f3f3]">
      <button aria-label="Minimize" className="flex w-[46px] justify-center">
        <svg viewBox="0 0 10 10" className="h-[10px] w-[10px]" stroke="#777"><path d="M0 4.500h10" /></svg>
      </button>
      <button aria-label="Restore" className="flex w-[46px] justify-center">
        <svg viewBox="0 0 10 10" className="h-[10px] w-[10px]" fill="none" stroke="#777">
          <path d="M.5 2.500h7v7h-7zM2.500 2.500v-2h7v7h-2" />
        </svg>
      </button>
      <button aria-label="Close" className="flex w-[46px] justify-center">
        <svg viewBox="0 0 10 10" className="h-[10px] w-[10px]" stroke="#777"><path d="M0 0l10 10M10 0L0 10" /></svg>
      </button>
    </div>
  );
}

function TabBar() {
  return (
    <div className="flex h-8 shrink-0 items-center bg-[#cbcbcb]">
      <div className="flex items-center gap-[18px] pl-4">
        <button aria-label="Data panel">
          <svg viewBox="0 0 16 16" className="h-4 w-4 fill-[#666]">
            <path d="M1 1h4v4H1zM6 1h4v4H6zM11 1h4v4h-4zM1 6h4v4H1zM6 6h4v4H6zM11 6h4v4h-4zM1 11h4v4H1zM6 11h4v4H6zM11 11h4v4h-4z" />
          </svg>
        </button>
        <button aria-label="File" className="flex items-center gap-[5px]">
          <svg viewBox="0 0 14 16" className="h-4 w-[14px] fill-[#666]"><path d="M0 0h8v5h5v11H0zM9 0l4 4H9z" /></svg>
          <Caret className="fill-[#666]" />
        </button>
        <button aria-label="Save">
          <svg viewBox="0 0 14 14" className="h-[14px] w-[14px]">
            <path d="M0 0h14v14H2l-2-2z" fill="#666" />
            <path d="M3 1h8v6H3zM4 9h6v5H4z" fill="#cbcbcb" />
            <path d="M4 1h6v5H4zM5 10h4v4H5z" fill="#666" />
            <path d="M7 1h2v3H7zM6 11h2v3H6z" fill="#cbcbcb" />
          </svg>
        </button>
        <div className="flex items-center gap-[13px]">
          <button aria-label="Undo" className="flex items-center gap-[6px]">
            <svg viewBox="0 0 14 12" className="h-3 w-[14px]" fill="none" stroke="#666" strokeWidth="2"><path d="M6 .5L1.500 4.500 6 8.500M2 4.500h5q5.500.5 5.500 7" /></svg>
            <Caret className="fill-[#666]" />
          </button>
          <button aria-label="Redo" className="flex items-center gap-[6px]">
            <svg viewBox="0 0 14 12" className="h-3 w-[14px]" fill="none" stroke="#999" strokeWidth="2"><path d="M8 .5l4.500 4L8 8.500M12 4.500H7Q1.500 5 1.500 11.500" /></svg>
            <Caret className="fill-[#999]" />
          </button>
        </div>
      </div>
      <button aria-label="Home" className="ml-2 flex h-7 w-[39px] items-center justify-center self-end rounded-t-[4px] bg-[#b9b9b9] pt-[2px] pl-[2px]">
        <svg viewBox="0 0 14 14" className="h-[14px] w-[14px] fill-[#777]"><path d="M7 0l3 3V1h2v4l2 2.500h-2V14H8.500v-4h-3v4H2V7.500H0z" /></svg>
      </button>
      <div className="relative ml-1 flex h-7 flex-1 items-center justify-center self-end rounded-t-[4px] bg-[#f1f1f1] pr-3 text-[12px] text-[#222]">
        <svg viewBox="0 0 16 16" className="mr-1 h-4 w-4" aria-hidden="true">
          <path d="M8 .5l7 3-7 4-7-4z" fill="#ffb27a" />
          <path d="M1 3.500l7 4v8l-6-4z" fill="#f58232" />
          <path d="M15 3.500l-7 4v8l6-4z" fill="#e0661a" />
        </svg>
        Spider bot v6*
        <button aria-label="Close tab" className="absolute top-[10px] right-[7px]">
          <svg viewBox="0 0 9 9" className="h-[9px] w-[9px]" stroke="#666" strokeWidth="1.500"><path d="M0 0l9 9M9 0L0 9" /></svg>
        </button>
      </div>
      <button aria-label="New tab" className="ml-1 flex h-7 w-7 items-center justify-center self-end rounded-t-[4px] bg-[#b9b9b9]">
        <svg viewBox="0 0 13 13" className="h-[13px] w-[13px] fill-[#777]"><path d="M5 0h3v5h5v3H8v5H5V8H0V5h5z" /></svg>
      </button>
      <div className="flex items-center gap-[17px] pr-[10px] pl-3">
        <button aria-label="Extensions">
          <svg viewBox="0 0 16 16" className="h-4 w-4">
            <circle cx="8" cy="8" r="6.500" fill="none" stroke="#555" strokeWidth="2.500" />
            <path d="M4 14L6 9l-1-3 4-4 5-1 1 4-4 5-2 2-2 3z" fill="#555" />
            <path d="M8 6l3-3M10 8l4-4M5.500 9l2 2" stroke="#cbcbcb" strokeWidth="1.200" />
          </svg>
        </button>
        <button aria-label="Job status">
          <svg viewBox="0 0 16 16" className="h-4 w-4">
            <circle cx="8" cy="8" r="7.500" fill="none" stroke="#555" />
            <circle cx="8" cy="8" r="6" fill="#555" />
            <path d="M8 4v4.500h3.500" fill="none" stroke="#e5e5e5" strokeWidth="1.500" />
          </svg>
        </button>
        <button aria-label="Notifications">
          <svg viewBox="0 0 16 16" className="h-4 w-4 fill-[#555]"><path d="M8 0q5 1 5 7 0 4 2 5v1H1v-1q2-1 2-5 0-6 5-7zM6 14h4q-2 3-4 0z" /></svg>
        </button>
        <button aria-label="Help" className="flex h-4 w-4 items-center justify-center rounded-full bg-[#555] text-[12px] leading-none font-bold text-[#e5e5e5]">?</button>
        <button className="ml-px flex h-[25px] w-[25px] items-center justify-center rounded-full bg-[#f1f1f1] font-[Roboto,sans-serif] text-[12px] text-[#555]">SD</button>
      </div>
    </div>
  );
}

function Ribbon() {
  return (
    <div className="flex h-[82px] shrink-0 border-b border-[#d9d9d9] bg-[#f1f1f1] font-[Roboto,sans-serif] text-[11px] text-[#333]">
      <button className="mt-[10px] ml-[11px] flex h-[62px] w-[111px] shrink-0 items-center justify-center gap-[6px] rounded-[4px] border-2 border-[#dedede] pl-1 font-bold">
        DESIGN <Caret />
      </button>
      <div className="flex flex-col pl-[4px]">
        <div className="flex h-[23px] gap-[19px] pl-3">
          {workspaceTabs.map((tab) => (
            <button
              key={tab}
              className={`border-b-[3px] px-[13px] pt-[3px] whitespace-nowrap ${tab === 'SOLID' ? 'border-[#0696d7] font-bold text-[#0696d7]' : 'border-transparent'}`}
            >
              {tab}
            </button>
          ))}
        </div>
        <div className="flex flex-1 items-start pt-[3px]">
          {ribbonGroups.map((group) => (
            <section
              key={group.label}
              className={`flex h-[51px] flex-col items-center border-r-2 border-[#dedede] pr-[4px] pl-[5px] last:border-r-0 ${group.width}`}
            >
              <div className="flex h-[34px] items-center">
                {group.icons.map((item) => (
                  <button key={item.name} title={item.name} className="flex w-[43px] justify-center">
                    {item.icon}
                  </button>
                ))}
              </div>
              <button className="flex h-[22px] shrink-0 items-center gap-[3px] pt-1 whitespace-nowrap">
                {group.label} <Caret />
              </button>
            </section>
          ))}
        </div>
      </div>
    </div>
  );
}

export default function App() {
  return (
    <div className="flex h-screen flex-col overflow-hidden bg-white font-['Liberation_Sans',Arial,sans-serif]">
      <TitleBar />
      <TabBar />
      <div className="flex min-h-0 flex-1">
        <div className="w-2 shrink-0 border-r border-[#8c8c8c] bg-[#e6e6e6]" />
        <div className="flex min-w-0 flex-1 flex-col">
          <Ribbon />
          <main className="relative mt-[2px] min-h-0 flex-1">
            <RobotModel />
            <BrowserPanel />
            <ViewCube />
            <NavBar />
            <button aria-label="Assistant" className="absolute right-[11px] bottom-2 flex h-[17px] w-[17px] items-center justify-center rounded-full rounded-br-none bg-black">
              <svg viewBox="0 0 11 9" className="h-[9px] w-[11px]" fill="none" stroke="#fff">
                <path d="M0 7l5-5 1 1 4-2M3 7l4-3M7 8l3-4" />
              </svg>
            </button>
          </main>
          <Timeline />
        </div>
      </div>
    </div>
  );
}
